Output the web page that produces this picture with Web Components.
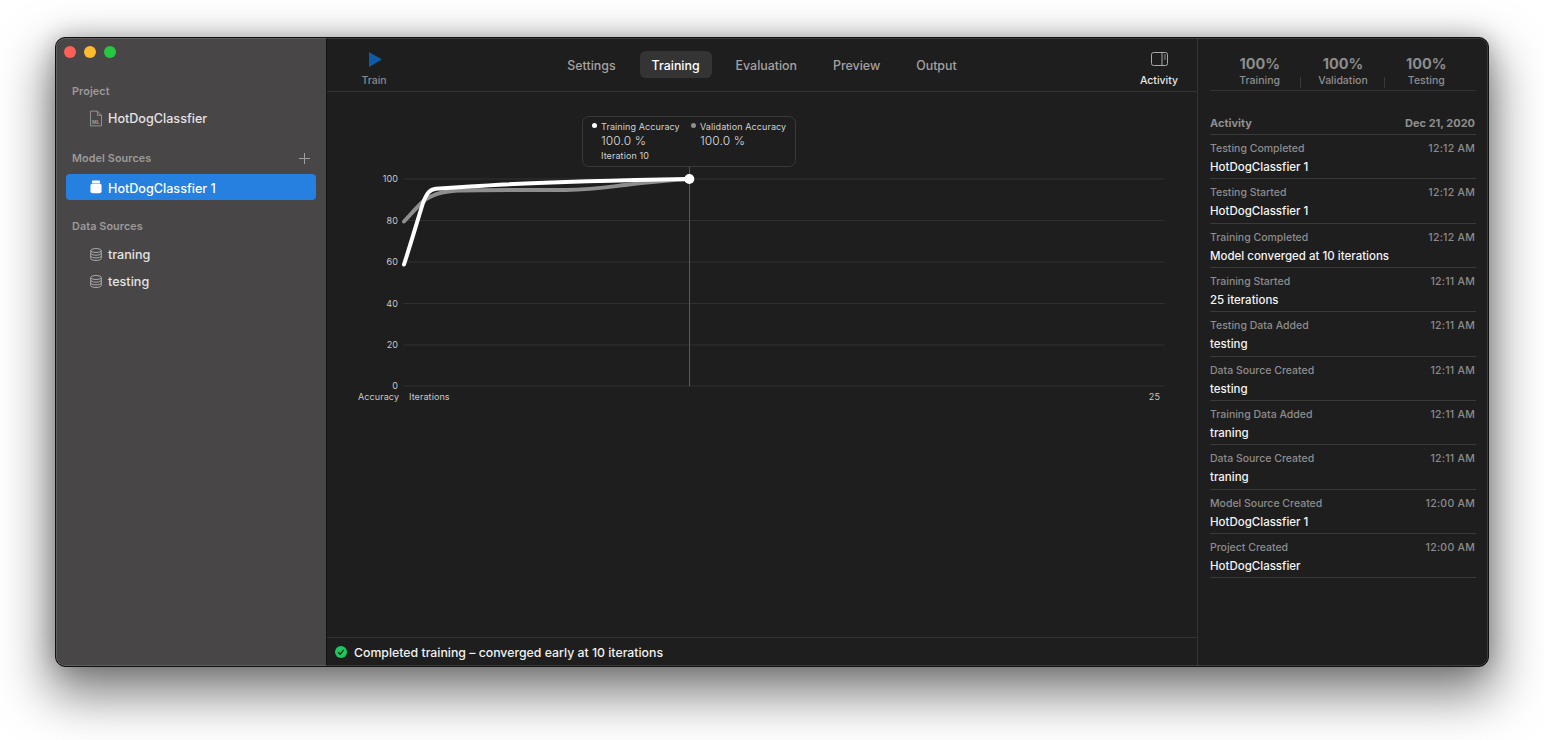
<!DOCTYPE html>
<html lang="en"><head><meta charset="utf-8"><title>HotDogClassfier</title>
<style>
html,body{margin:0;padding:0;background:#fff;height:740px;overflow:hidden;font-family:Inter,"Liberation Sans",sans-serif}
</style></head><body>
<app-window>
  <side-bar slot="side"></side-bar>
  <main-pane slot="main"></main-pane>
  <activity-pane slot="right"></activity-pane>
</app-window>
<script>
function def(name, html){
  customElements.define(name, class extends HTMLElement{
    connectedCallback(){
      if(this.shadowRoot) return;
      const r=this.attachShadow({mode:'open'});
      r.innerHTML=typeof html==='function'?html(this):html;
    }
  });
}
const a=(e,n,d='')=>e.getAttribute(n)??d;

def('app-window',`<style>
:host{display:block;padding:37px 55px 0;box-sizing:border-box;width:1544px;height:740px}
.w{position:relative;width:1434px;height:630px;box-sizing:border-box;border-radius:10px;overflow:hidden;display:grid;grid-template-columns:271px 871px 290px;background:#1e1e1e;border:1px solid #111}
.f{width:1434px;height:630px;border-radius:10px;box-shadow:0 22px 50px 6px rgba(0,0,0,.5),0 0 22px rgba(0,0,0,.22)}
.w::after{content:"";position:absolute;inset:0;border-radius:9px;box-shadow:inset 0 0 0 1px rgba(255,255,255,.13);pointer-events:none}
</style><div class="f"><div class="w"><slot name="side"></slot><slot name="main"></slot><slot name="right"></slot></div></div>`);

const ic={
 doc:`<svg width="13" height="17" viewBox="0 0 13 17" fill="none" stroke="#9b9999"><path d="M.5 .5H8L12.5 5V16.5H.5Z"/><path d="M8 .5V5H12.5"/><text x="6.4" y="14" font-size="5.5" font-weight="700" fill="#9b9999" stroke="none" text-anchor="middle" font-family="Inter">ML</text></svg>`,
 jar:`<svg width="13" height="14" viewBox="0 0 13 14"><rect x="2.2" y="0" width="8.6" height="2.6" rx=".8" fill="#fff"/><rect x=".5" y="3.2" width="12" height="10.6" rx="2.2" fill="#fff"/></svg>`,
 db:`<svg width="12" height="13" viewBox="0 0 12 13" fill="none" stroke="#a8a7a7" stroke-width="1"><ellipse cx="6" cy="2.5" rx="5.3" ry="2"/><path d="M.7 2.5V10.5C.7 11.6 3 12.5 6 12.5S11.3 11.6 11.3 10.5V2.5"/><path d="M.7 5.2C.7 6.3 3 7.2 6 7.2S11.3 6.3 11.3 5.2M.7 7.9C.7 9 3 9.9 6 9.9S11.3 9 11.3 7.9"/></svg>`
};

def('side-head',e=>`<style>
:host{display:flex;align-items:center;justify-content:space-between;height:16px;padding:0 16px 0 16px;font-size:10.8px;font-weight:600;color:#9c9a9a;letter-spacing:.1px}
svg{display:block}
</style><span><slot></slot></span>${e.hasAttribute('plus')?`<svg width="11" height="11" viewBox="0 0 11 11" stroke="#a09f9f" stroke-width="1"><path d="M5.5 0V11M0 5.5H11"/></svg>`:''}`);

def('side-item',e=>`<style>
:host{display:flex;align-items:center;gap:6px;height:26px;margin:0 10px;padding-left:24px;border-radius:4px;font-size:12.6px;font-weight:500;color:#e4e3e3;box-sizing:border-box}
:host([selected]){background:#2580e0;color:#fff}
:host([selected]) .x{position:relative;top:1px}
.i{width:12px;display:flex;justify-content:center}
</style><span class="i">${ic[a(e,'icon')]}</span><span class="x"><slot></slot></span>`);

def('side-bar',`<style>
:host{display:flex;flex-direction:column;background:#484646;border-right:1px solid #111;box-sizing:border-box;height:628px;width:271px}
.lights{display:flex;gap:8px;padding:8px 0 0 8px;height:17px}
.lights i{width:12px;height:12px;border-radius:50%;display:block}
</style>
<div class="lights"><i style="background:#fe5f57"></i><i style="background:#febb2e"></i><i style="background:#27c83f"></i></div>
<side-head style="margin-top:20px">Project</side-head>
<side-item icon="doc" style="margin-top:6px">HotDogClassfier</side-item>
<side-head plus style="margin-top:19px">Model Sources</side-head>
<side-item icon="jar" selected style="margin-top:8px">HotDogClassfier 1</side-item>
<side-head style="margin-top:18px">Data Sources</side-head>
<side-item icon="db" style="margin-top:7px">traning</side-item>
<side-item icon="db" style="margin-top:1px">testing</side-item>`);

def('tab-item',`<style>
:host{display:flex;align-items:center;height:27px;box-sizing:border-box;padding:3px 12px 0;font-size:12.4px;font-weight:500;color:#a3a2a2;border-radius:6px}
:host([active]){background:#343434;color:#fff}
</style><slot></slot>`);

def('tool-btn',e=>`<style>
:host{display:flex;flex-direction:column;align-items:center;width:60px;font-size:10.5px;font-weight:500;color:${a(e,'color','#8b8a8a')}}
.ic{height:27px;margin-top:-1px;display:flex;align-items:center;justify-content:center}
span{margin-top:1px}
</style><div class="ic"><slot name="icon"></slot></div><span><slot></slot></span>`);

def('tool-bar',`<style>
:host{display:grid;grid-template-columns:1fr auto 1fr;align-items:center;height:54px;box-sizing:border-box;border-bottom:1px solid #333;padding:0 8px}
.tabs{display:flex;gap:12px;margin-top:-1px}
.r{justify-self:end}.l{justify-self:start;margin-left:9px}
svg{display:block}
tool-btn{margin-top:4px}
</style>
<tool-btn class="l"><svg slot="icon" width="13" height="15" viewBox="0 0 13 15" style="margin-left:2px"><path d="M0 0L13 7.5L0 15Z" fill="#0e5ba6"/></svg>Train</tool-btn>
<div class="tabs"><tab-item>Settings</tab-item><tab-item active>Training</tab-item><tab-item>Evaluation</tab-item><tab-item>Preview</tab-item><tab-item>Output</tab-item></div>
<tool-btn class="r" color="#e6e6e6"><svg slot="icon" width="17" height="14" viewBox="0 0 17 14" fill="none" stroke="#a9a8a8"><rect x=".5" y=".5" width="16" height="13" rx="2"/><path d="M11 .5V13.5"/><path d="M12.8 3H15M12.8 5H15M12.8 7H15" stroke-width=".8"/></svg>Activity</tool-btn>`);

def('chart-tip',`<style>
:host{position:absolute;left:255px;top:24px;width:214px;height:51px;box-sizing:border-box;border:1px solid #3a3a3a;border-radius:7px;background:#1e1e1e;display:grid;grid-template-columns:99px 1fr;padding:4px 0 0 9px;color:#d2d2d2;font-size:9px;letter-spacing:.1px;font-weight:400}
.h{display:flex;align-items:center;gap:4px;height:11px;white-space:nowrap}
.h i{width:5px;height:5px;border-radius:50%;display:block;margin-top:-2px}
.v{font-size:12px;color:#dedede;margin:1px 0 0 9px;line-height:15px;letter-spacing:.1px;font-weight:300}
.n{margin:2px 0 0 9px;line-height:11px}
</style>
<div><div class="h"><i style="background:#fff"></i>Training Accuracy</div><div class="v">100.0 %</div><div class="n">Iteration 10</div></div>
<div><div class="h"><i style="background:#8e8e8e"></i>Validation Accuracy</div><div class="v">100.0 %</div></div>`);

def('train-chart',()=>{
 const ys=[[100,179],[80,220.5],[60,262],[40,303.5],[20,345],[0,386]];
 return `<style>
:host{display:block;position:relative;flex:1;min-height:0}
svg{display:block;width:870px;height:545px}
text{font-family:Inter,"Liberation Sans",sans-serif;font-size:9px;fill:#c9c9c9;letter-spacing:.1px}
</style>
<svg viewBox="327 92 870 545">
${ys.map(([v,y])=>`<path d="M403 ${y}H1165" stroke="#303030" stroke-width="1"/><text x="398" y="${y+3.2}" text-anchor="end">${v}</text>`).join('')}
<path d="M689.5 167V386" stroke="#5a5a5a"/>
<text x="358" y="400">Accuracy</text><text x="409" y="400">Iterations</text><text x="1160" y="400" text-anchor="end">25</text>
<path d="M404 221.5C411 214 417 207 423 201.5C431 194.5 441 191.5 458 190.5C490 189.5 535 190 566 190C590 189.8 605 187.5 625 185C650 182 670 180 689 179" fill="none" stroke="#8e8e8e" stroke-width="4" stroke-linecap="round"/>
<path d="M404 264.5C411 243 417 222 423 203C427 192 430 189.5 436 188.8L470 186.5C520 183 600 180.5 689 179" fill="none" stroke="#fff" stroke-width="4" stroke-linecap="round"/>
<circle cx="689.3" cy="179" r="5" fill="#fff"/>
</svg><chart-tip></chart-tip>`});

def('status-bar',`<style>
:host{display:flex;align-items:center;gap:7px;height:29px;box-sizing:border-box;border-top:1px solid #333;padding-left:8px;font-size:12.3px;font-weight:500;color:#f1f1f1}
svg{display:block}
</style><svg width="12" height="12" viewBox="0 0 12 12"><circle cx="6" cy="6" r="6" fill="#1ac85c"/><path d="M3.2 6.2L5.2 8.2L8.8 3.8" fill="none" stroke="#0d2a16" stroke-width="1.3"/></svg><span><slot></slot></span>`);

def('main-pane',`<style>
:host{display:flex;flex-direction:column;height:628px;background:#1e1e1e;border-right:1px solid #333;box-sizing:border-box;width:871px}
</style><tool-bar></tool-bar><train-chart></train-chart><status-bar>Completed training – converged early at 10 iterations</status-bar>`);

def('stat-box',e=>`<style>
:host{display:flex;flex-direction:column;align-items:center;flex:1;position:relative;font-size:10.5px;font-weight:500;color:#8f8e8e}
b{font-size:14.5px;font-weight:700;line-height:18px;color:#8d8c8c}
span{line-height:14px;margin-top:1px}
:host(:not(:last-child))::after{content:"";position:absolute;right:0;top:22px;height:11px;width:1px;background:#3a3a3a}
</style><b>${a(e,'value')}</b><span><slot></slot></span>`);

def('activity-row',e=>`<style>
:host{display:block;height:44.33px;box-sizing:border-box;border-bottom:1px solid #3a3a3a;padding-top:7px;position:relative}
.t{display:flex;justify-content:space-between;font-size:10.5px;font-weight:500;line-height:14px;color:#8d8c8c;padding-right:1px}
.t span+span{letter-spacing:.25px}
.b{font-size:11.5px;font-weight:500;line-height:14px;color:#f4f4f4;margin-top:4px}
</style><div class="t"><span>${a(e,'title')}</span><span>${a(e,'time')}</span></div><div class="b"><slot></slot></div>`);

const rows=[["Testing Completed","12:12 AM","HotDogClassfier 1"],["Testing Started","12:12 AM","HotDogClassfier 1"],["Training Completed","12:12 AM","Model converged at 10 iterations"],["Training Started","12:11 AM","25 iterations"],["Testing Data Added","12:11 AM","testing"],["Data Source Created","12:11 AM","testing"],["Training Data Added","12:11 AM","traning"],["Data Source Created","12:11 AM","traning"],["Model Source Created","12:00 AM","HotDogClassfier 1"],["Project Created","12:00 AM","HotDogClassfier"]];
def('activity-pane',`<style>
:host{display:block;padding:0 12px;height:628px;box-sizing:border-box;background:#1e1e1e}
.stats{display:flex;height:53px;box-sizing:border-box;border-bottom:1px solid #333;padding:17px 8px 0}
.head{display:flex;justify-content:space-between;margin-top:25px;height:19px;box-sizing:border-box;border-bottom:1px solid #3a3a3a;font-size:11px;font-weight:700;color:#8f8e8e;line-height:14px;padding-right:1px}
</style>
<div class="stats"><stat-box value="100%">Training</stat-box><stat-box value="100%">Validation</stat-box><stat-box value="100%">Testing</stat-box></div>
<div class="head"><span>Activity</span><span>Dec 21, 2020</span></div>
${rows.map(r=>`<activity-row title="${r[0]}" time="${r[1]}">${r[2]}</activity-row>`).join('')}`);
</script>
</body></html>
